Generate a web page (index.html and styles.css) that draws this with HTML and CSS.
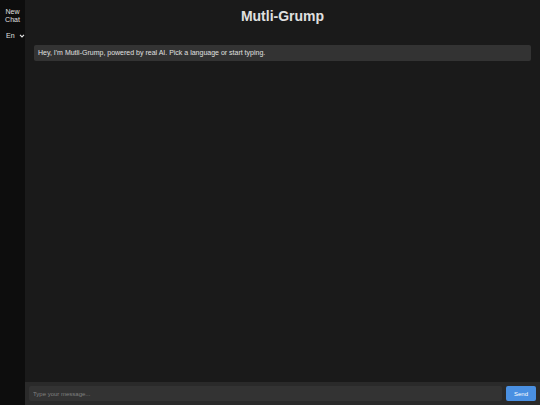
FILE: index.html
```html
<!DOCTYPE html>
<html lang="en">
<head>
<meta charset="utf-8">
<title>Mutli-Grump</title>
<link rel="stylesheet" href="styles.css">
</head>
<body>
<aside class="sidebar">
  <button class="new-chat" type="button">New Chat</button>
  <div class="language">
    <select class="language-select" aria-label="Language"><option>En</option></select>
    <svg class="chevron" viewBox="0 0 6 4" aria-hidden="true"><path d="M1 .8 3 2.8 5 .8"/></svg>
  </div>
</aside>
<main class="chat">
  <h1 class="title">Mutli-Grump</h1>
  <div class="messages">
    <p class="message">Hey, I'm Mutli-Grump, powered by real AI. Pick a language or start typing.</p>
  </div>
  <form class="composer">
    <input class="composer-input" type="text" aria-label="Message" placeholder="Type your message...">
    <button class="send" type="button">Send</button>
  </form>
</main>
</body>
</html>
```
FILE: styles.css
```css
* {
  box-sizing: border-box;
}

body {
  display: flex;
  min-height: 100vh;
  margin: 0;
  background: #1a1a1a;
  color: #e0e0e0;
  font-family: "Liberation Sans", Arial, sans-serif;
  font-size: 7px;
}

button,
input,
select {
  border: 0;
  font: inherit;
}

.sidebar {
  display: flex;
  flex-direction: column;
  gap: 8px;
  width: 25px;
  padding: 8px 0;
  background: #0d0d0d;
}

.new-chat {
  padding: 0 4px;
  background: none;
  color: inherit;
  line-height: 8px;
}

.language {
  display: flex;
  align-items: center;
  position: relative;
}

.language-select {
  width: 100%;
  padding: 0 6px;
  appearance: none;
  background: none;
  color: inherit;
  line-height: 8px;
}

.chevron {
  position: absolute;
  right: 0;
  width: 6px;
  height: 4px;
  fill: none;
  stroke: #e0e0e0;
  stroke-width: 1.2;
  pointer-events: none;
}

.chat {
  display: flex;
  flex: 1;
  flex-direction: column;
}

.title {
  margin: 0;
  padding: 8px;
  font-size: 14px;
  line-height: 16px;
  text-align: center;
}

.messages {
  flex: 1;
  padding: 13px 9px;
}

.message {
  margin: 0;
  padding: 4px;
  border-radius: 2px;
  background: #333;
  line-height: 8px;
}

.composer {
  display: flex;
  gap: 4px;
  padding: 4px;
  background: #2a2a2a;
}

.composer-input {
  flex: 1;
  min-width: 0;
  padding: 4px;
  border-radius: 2px;
  background: #333;
  color: inherit;
  font-size: 6px;
}

.composer-input::placeholder {
  color: #808080;
}

.send {
  width: 30px;
  height: 15px;
  padding: 0;
  border-radius: 2px;
  background: #4a90e2;
  color: #fff;
  font-size: 6px;
}
```
